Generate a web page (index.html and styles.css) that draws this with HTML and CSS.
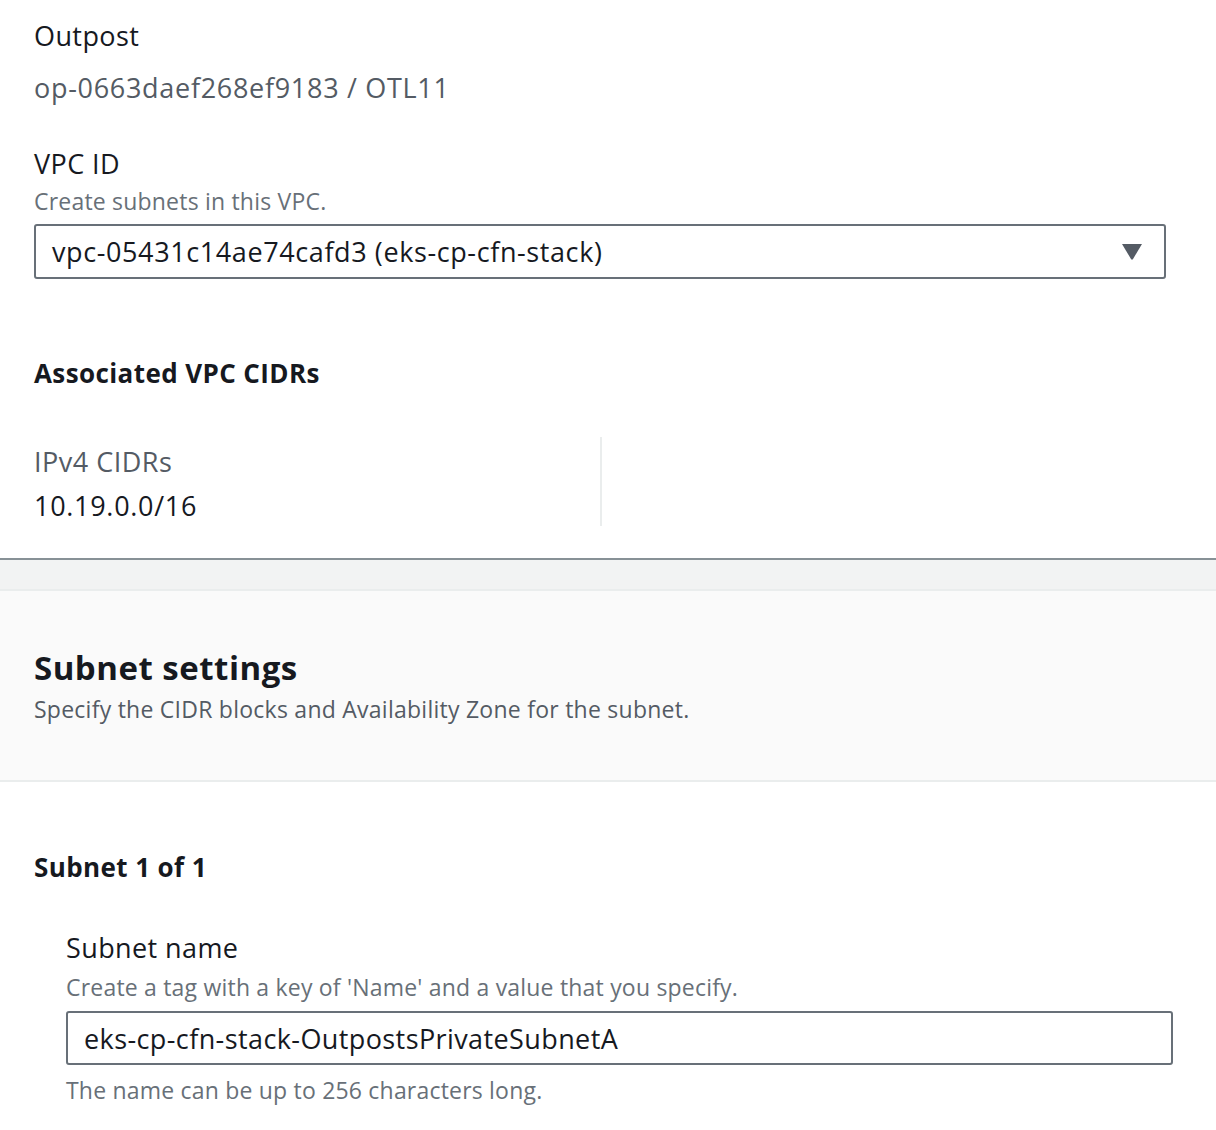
FILE: index.html
```html
<!DOCTYPE html>
<html lang="en">
<head>
<meta charset="utf-8">
<title>Create subnet</title>
<link rel="stylesheet" href="styles.css">
</head>
<body>
<section class="panel panel-top">
  <div class="label label-first">Outpost</div>
  <div class="value">op-0663daef268ef9183 / OTL11</div>

  <div class="label label-vpc">VPC ID</div>
  <div class="helper">Create subnets in this VPC.</div>
  <div class="select">
    <span class="select-text">vpc-05431c14ae74cafd3 (eks-cp-cfn-stack)</span>
    <svg class="caret" width="22" height="17" viewBox="0 0 22 17"><path d="M1 1 H21 L12 16 Q11 17.5 10 16 Z" fill="#545b64"/></svg>
  </div>

  <h3 class="subheading cidr-heading">Associated VPC CIDRs</h3>
  <div class="cidr-grid">
    <div class="cidr-col">
      <div class="cidr-label">IPv4 CIDRs</div>
      <div class="cidr-value">10.19.0.0/16</div>
    </div>
    <div class="cidr-col cidr-col-empty"></div>
  </div>
</section>
<div class="band"></div>
<header class="panel panel-header">
  <h2 class="heading">Subnet settings</h2>
  <div class="description">Specify the CIDR blocks and Availability Zone for the subnet.</div>
</header>
<section class="panel panel-subnet">
  <h3 class="subheading subnet-heading">Subnet 1 of 1</h3>
  <div class="subnet-fields">
    <div class="label label-name">Subnet name</div>
    <div class="helper">Create a tag with a key of 'Name' and a value that you specify.</div>
    <div class="input">eks-cp-cfn-stack-OutpostsPrivateSubnetA</div>
    <div class="constraint">The name can be up to 256 characters long.</div>
  </div>
</section>
</body>
</html>
```
FILE: styles.css
```css
* { box-sizing: border-box; }
body {
  margin: 0;
  background: #ffffff;
  font-family: "Open Sans", "Noto Sans", sans-serif;
  color: #16191f;
}
.panel { padding-left: 34px; }
.panel-top {
  padding-top: 18px;
  padding-right: 50px;
  padding-bottom: 32px;
  border-bottom: 2px solid #879196;
  box-shadow: 0 1px 0 #aab7b8;
}
.label {
  font-size: 27px;
  line-height: 36px;
  letter-spacing: 0.4px;
  color: #16191f;
}
.value {
  margin-top: 16px;
  font-size: 27px;
  line-height: 36px;
  letter-spacing: 0.7px;
  color: #545b64;
}
.label-vpc { margin-top: 40px; }
.helper {
  margin-top: 4px;
  font-size: 23px;
  line-height: 30px;
  letter-spacing: 0.2px;
  color: #687078;
}
.select {
  margin-top: 8px;
  height: 55px;
  border: 2px solid #687078;
  border-radius: 3px;
  display: flex;
  align-items: center;
  justify-content: space-between;
  padding: 0 21px 0 16px;
  font-size: 27px;
  letter-spacing: 0.6px;
}
.caret { display: block; }
.subheading {
  margin: 0;
  font-size: 26px;
  line-height: 36px;
  font-weight: 700;
  letter-spacing: 0.4px;
}
.cidr-heading { margin-top: 76px; }
.cidr-grid {
  margin-top: 46px;
  display: grid;
  grid-template-columns: 568px 1fr;
}
.cidr-col {
  padding-top: 7px;
  height: 89px;
  border-right: 2px solid #eaeded;
}
.cidr-col-empty { border-right: none; }
.cidr-label {
  font-size: 27px;
  line-height: 36px;
  letter-spacing: 0.5px;
  color: #545b64;
}
.cidr-value {
  margin-top: 8px;
  font-size: 27px;
  line-height: 36px;
  letter-spacing: 0.7px;
}
.band {
  height: 31px;
  background: #f2f3f3;
  border-bottom: 2px solid #eaeded;
}
.panel-header {
  background: #fafafa;
  padding-top: 57px;
  padding-bottom: 56px;
  border-bottom: 2px solid #eaeded;
}
.heading {
  margin: 0;
  font-size: 33px;
  line-height: 40px;
  font-weight: 700;
  letter-spacing: 0.5px;
}
.description {
  margin-top: 6px;
  font-size: 23px;
  line-height: 30px;
  letter-spacing: 0.25px;
  color: #545b64;
}
.panel-subnet {
  padding-top: 67px;
  padding-right: 43px;
}
.subnet-fields { padding-left: 32px; }
.label-name { margin-top: 45px; }
.subnet-fields .helper { margin-top: 6px; }
.input {
  margin-top: 9px;
  height: 54px;
  border: 2px solid #687078;
  border-radius: 3px;
  padding: 0 16px;
  display: flex;
  align-items: center;
  font-size: 27px;
  letter-spacing: 0.4px;
}
.constraint {
  margin-top: 10px;
  font-size: 23px;
  line-height: 30px;
  letter-spacing: 0.2px;
  color: #687078;
}
```
